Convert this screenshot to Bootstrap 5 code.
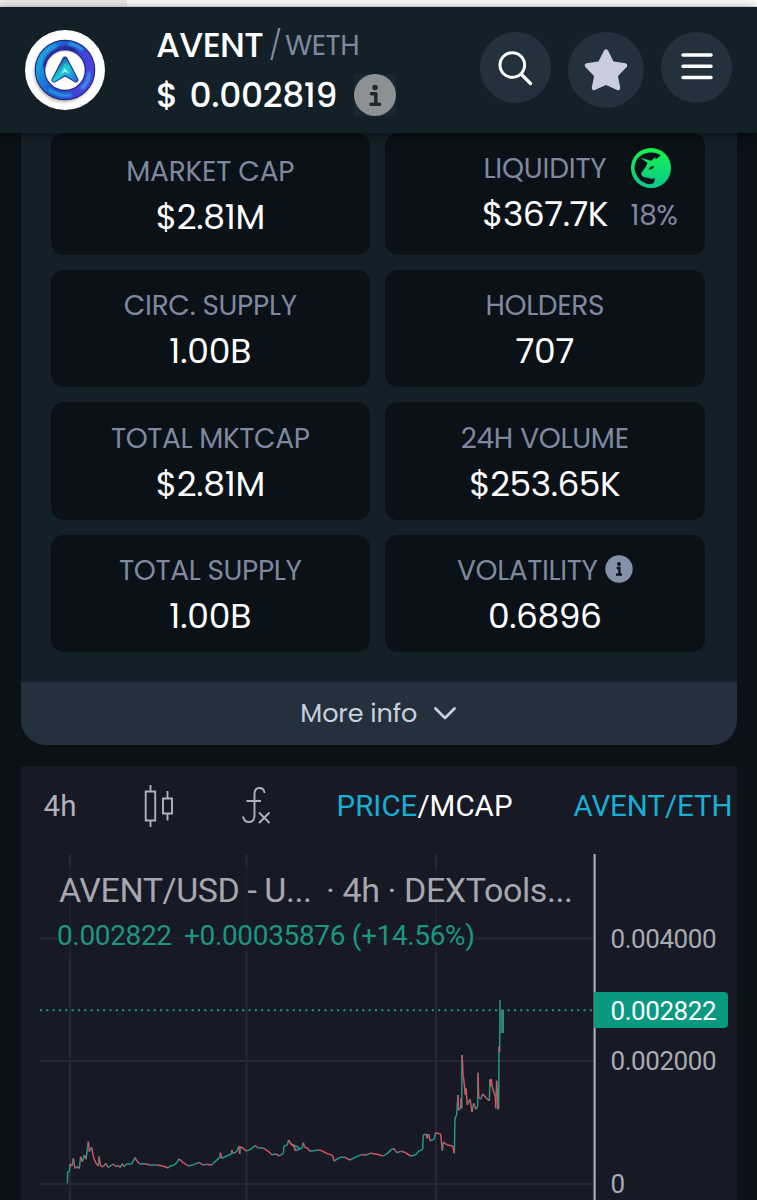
<!DOCTYPE html>
<html lang="en" data-bs-theme="dark">
<head>
<meta charset="utf-8">
<meta name="viewport" content="width=device-width, initial-scale=1">
<title>AVENT / WETH</title>
<link href="https://cdn.jsdelivr.net/npm/bootstrap@5.3.0/dist/css/bootstrap.min.css" rel="stylesheet">
<style>
body{background:#0a1117;font-family:Poppins,Inter,sans-serif;height:1200px;overflow:hidden;color:#fff}
.strip{height:7px;background:#fff;border-bottom:1px solid #dfe4e7}
.strip-tab{width:127px;height:6px;background:#efeded}
.topbar{height:126px;background:#142028;padding-left:25px;padding-right:25px;box-shadow:0 2px 12px rgba(0,0,0,.45);position:relative;z-index:2}
.fit{display:inline-block;white-space:nowrap}
.token-names{margin-left:51px;width:323px;height:126px;padding-top:11.5px}
.line-a{height:52px;line-height:53px}
.line-b{height:48px;line-height:50px}
.sym{font-size:34.5px;font-weight:500}
.quote{font-size:28px;color:#7f889f;line-height:53px}
.slash{font-size:29px;font-weight:300;color:#858da5;line-height:52px;margin:0 5px 0 6px}
.line-b .sym+.sym{margin-left:14.500px}
.infobox{width:42px;height:42px;background:#1b272e;margin-left:17px}
.round{width:71px;height:71px;background:#24313c}
.round-lg{width:76px;height:76px}
.actions{margin-left:1px;gap:17px;height:71px;margin-bottom:5px}
.panel{margin:0 20.5px 0 21px;background:#142028;border-radius:0 0 25px 25px;overflow:hidden;height:612px}
.stats{padding:0 32px 0 29.5px;display:grid;grid-template-columns:319.5px 319.5px;column-gap:15px;row-gap:15px;grid-template-rows:121.5px 117.5px 117.5px 117.5px}
.stat{background:#0a1117;border-radius:13px;padding-top:15.5px;text-align:center}
.stat-first{padding-top:17.5px}
.lab{font-size:28px;font-weight:400;line-height:41px;height:40px;color:#7f889f}
.val{font-size:34.5px;font-weight:400;line-height:52px;height:52px}
.liq{padding-left:97px;gap:22.500px;justify-content:flex-start;padding-top:15px}
.pct{font-size:28px;line-height:55px;color:#7f889f}
.more{height:63px;margin-top:29.5px;background:#24313c;color:#c8cfdf;font-size:25.5px;gap:17px;padding-right:1px}
.chart{margin:21px 20px 0 21px;height:434px;background:#171924;font-family:Roboto,sans-serif}
.chart text{font-family:Roboto,sans-serif}
</style>
</head>
<body>
<div class="strip"><div class="strip-tab"></div></div>
<header class="topbar d-flex align-items-center">
  <svg width="80" height="80" viewBox="0 0 80 80" class="flex-shrink-0">
    <defs>
      <linearGradient id="ring" x1="0" y1=".3" x2="1" y2=".6"><stop offset="0" stop-color="#159bdc"/><stop offset=".45" stop-color="#2347c9"/><stop offset="1" stop-color="#5040df"/></linearGradient>
      <linearGradient id="arrow" x1="0" y1="0" x2="1" y2="1"><stop offset="0" stop-color="#21289f"/><stop offset=".5" stop-color="#21cbd0"/><stop offset="1" stop-color="#246ddb"/></linearGradient>
      <filter id="soft" x="-20%" y="-20%" width="140%" height="140%"><feGaussianBlur stdDeviation="1.6"/></filter>
      <filter id="sheen" x="-20%" y="-20%" width="140%" height="140%"><feGaussianBlur stdDeviation=".8"/></filter>
    </defs>
    <circle cx="40" cy="40" r="40" fill="#fff"/>
    <circle cx="39" cy="42" r="26" fill="none" stroke="#7f7770" stroke-width="8" opacity=".55" filter="url(#soft)"/>
    <circle cx="40" cy="40" r="25" fill="none" stroke="#17236f" stroke-width="10.5"/>
    <circle cx="40" cy="40" r="25" fill="none" stroke="url(#ring)" stroke-width="8.5"/>
    <g fill="none" stroke-linecap="round" filter="url(#sheen)">
      <path d="M14 40A26 26 0 0 1 30 16M25 60A25 25 0 0 0 45 65" stroke="#20a0e4" stroke-width="3"/>
      <path d="M50 20A22 22 0 0 0 19 36" stroke="#291b94" stroke-width="3"/>
      <path d="M44 13.500A27 27 0 0 1 57 19.500M64 43Q64 52 57 58" stroke="#27b4e8" stroke-width="2.400"/>
    </g>
    <path d="M40 29L29 50L40 43.500L51 50Z" fill="none" stroke="#19308f" stroke-width="5" stroke-linejoin="round"/>
    <path d="M40 30L29 50L40 43L51 50Z" fill="#21cbd0" stroke="url(#arrow)" stroke-width="3.500" stroke-linejoin="round"/>
    <path d="M40 38L36 44L40 41.500L44 44Z" fill="#a9eee9"/>
  </svg>
  <div class="token-names flex-shrink-0">
    <div class="line-a d-flex align-items-start"><span class="fit sym" data-w="107">AVENT</span><span class="fit slash" data-w="11">/</span><span class="fit quote" data-w="74">WETH</span></div>
    <div class="line-b d-flex align-items-center"><span class="fit sym" data-w="19">$</span><span class="fit sym" data-w="147.500">0.002819</span>
      <span class="infobox d-block"><svg width="42" height="42" viewBox="0 0 42 42" class="d-block"><circle cx="21" cy="21" r="21" fill="#8e9193"/><circle cx="21" cy="13.500" r="2.800" fill="#1f2a30"/><path d="M17.500 19.800h4.300v10.200M17 30.200h8.500" fill="none" stroke="#1f2a30" stroke-width="3.600" stroke-linecap="round" stroke-linejoin="round"/></svg></span></div>
  </div>
  <div class="actions d-flex align-items-start">
    <div class="round rounded-circle"><svg width="71" height="71" viewBox="0 0 71 71" fill="none" stroke="#fff" stroke-linecap="round"><circle cx="32.300" cy="33" r="12.300" stroke-width="3"/><path d="M41.500 42.500L50.500 51.500" stroke-width="3.200"/></svg></div>
    <div class="round round-lg rounded-circle"><svg width="76" height="76" viewBox="0 0 76 76"><path d="M38 19.500L44 31.500L57 33.500L47.500 43.500L50 56L38 50.500L26 56L28.500 43.500L19 33.500L32 31.500Z" fill="#cbcddd" stroke="#cbcddd" stroke-width="4.500" stroke-linejoin="round"/></svg></div>
    <div class="round rounded-circle"><svg width="71" height="71" viewBox="0 0 71 71"><path d="M22 23h28M22 34.300h28M22 45.500h28" stroke="#fff" stroke-width="3.500" stroke-linecap="round"/></svg></div>
  </div>
</header>
<section class="panel">
  <div class="stats">
    <div class="stat stat-first"><div class="lab"><span class="fit" data-w="168">MARKET CAP</span></div><div class="val"><span class="fit" data-w="109">$2.81M</span></div></div>
    <div class="stat liq d-flex">
      <div><div class="lab"><span class="fit" data-w="123">LIQUIDITY</span></div><div class="val"><span class="fit" data-w="126">$367.7K</span></div></div>
      <div class="text-start"><svg width="40" height="40" viewBox="0 0 40 40" class="d-block"><defs><linearGradient id="uni" x1="0" y1="0" x2="0" y2="1"><stop offset="0" stop-color="#15f54c"/><stop offset="1" stop-color="#0bc98c"/></linearGradient></defs><circle cx="20" cy="20" r="20" fill="url(#uni)"/><path d="M30 7.500C22 1.500 4 4 3.500 20C4 28 10 35 18 36.200C22.500 36.500 24.500 34 23.500 29.500C22.500 31 21 31 19 30.500L11.500 28.500L10 25.500L15 18.500L16.500 15L9.500 9.800L20 12.800L24.500 9L24.500 11.500L29 8Z" fill="#0a1117"/><path d="M17.500 21.500Q19.500 17.500 23 18.300Q22 22 17.500 21.500Z" fill="#0a1117"/></svg><div class="pct"><span class="fit" data-w="47">18%</span></div></div>
    </div>
    <div class="stat"><div class="lab"><span class="fit" data-w="173">CIRC. SUPPLY</span></div><div class="val"><span class="fit" data-w="82">1.00B</span></div></div>
    <div class="stat"><div class="lab"><span class="fit" data-w="118.500">HOLDERS</span></div><div class="val"><span class="fit" data-w="58.500">707</span></div></div>
    <div class="stat"><div class="lab"><span class="fit" data-w="198.500">TOTAL MKTCAP</span></div><div class="val"><span class="fit" data-w="109">$2.81M</span></div></div>
    <div class="stat"><div class="lab"><span class="fit" data-w="168">24H VOLUME</span></div><div class="val"><span class="fit" data-w="151">$253.65K</span></div></div>
    <div class="stat"><div class="lab"><span class="fit" data-w="182.500">TOTAL SUPPLY</span></div><div class="val"><span class="fit" data-w="82">1.00B</span></div></div>
    <div class="stat"><div class="lab d-flex justify-content-center align-items-center"><span class="fit" data-w="140.500">VOLATILITY</span><svg width="28" height="28" viewBox="0 0 28 28" style="margin:-2px 0 0 7px"><circle cx="14" cy="14" r="13.700" fill="#8590a9"/><circle cx="14" cy="9" r="1.900" fill="#0a1117"/><path d="M11.800 13h2.600v6.500M11 19.700h6" fill="none" stroke="#0a1117" stroke-width="2.300"/></svg></div><div class="val"><span class="fit" data-w="113.500">0.6896</span></div></div>
  </div>
  <div class="more d-flex align-items-center justify-content-center"><span class="fit" data-w="117">More info</span><svg width="22" height="14" viewBox="0 0 22 14" fill="none" stroke="#c8cfdf" stroke-width="2.800" stroke-linecap="round" stroke-linejoin="round"><path d="M1.500 2.500L11 12L20.500 2.500"/></svg></div>
</section>
<section class="chart">
  <svg width="716" height="434" viewBox="21 766 716 434" class="d-block">
    <g stroke="#262933" stroke-width="2"><path d="M70 854V1200M246.500 854V1200M436 854V1200M40 938.500H594M40 1061H594M40 1184H594"/></g>
    <path d="M57 868H583V910H478V953H57Z" fill="#171924" opacity=".6"/>
    <path d="M40 1010.300H594" stroke="#1e9b87" stroke-width="2" stroke-dasharray="2 4.320"/>
    <g id="series" fill="none" stroke-width="1.500"></g>
    <path d="M502.300 1010V1033" stroke="#32877a" stroke-width="3.400"/>
    <path d="M594.600 854V1200" stroke="#b8b9be" stroke-width="2"/>
    <path d="M594 992H724a4 4 0 0 1 4 4V1024a4 4 0 0 1-4 4H594Z" fill="#089981"/>
    <g fill="#a9abb3" font-size="26">
      <text x="610.500" y="947.500" textLength="106">0.004000</text>
      <text x="610.500" y="1070" textLength="106">0.002000</text>
      <text x="610.500" y="1193">0</text>
      <text x="610.500" y="1020" textLength="106" fill="#fff">0.002822</text>
    </g>
    <g font-size="29.500">
      <text x="43.500" y="815.500" textLength="33" fill="#b0b1b9">4h</text>
      <text x="336.500" y="815.500" textLength="176" fill="#fff"><tspan fill="#17b0d3">PRICE</tspan>/MCAP</text>
      <text x="573.500" y="815.500" textLength="159" fill="#17b0d3">AVENT/ETH</text>
    </g>
    <g font-size="28" fill="#1b9781">
      <text x="57" y="945" textLength="115">0.002822</text>
      <text x="184" y="945" textLength="291">+0.00035876 (+14.56%)</text>
    </g>
    <g font-size="34" fill="#a6a7af">
      <text x="59" y="902" textLength="253">AVENT/USD - U...</text>
      <text x="326" y="902" textLength="247">· 4h · DEXTools...</text>
    </g>
    <g fill="none" stroke="#b0b1b9" stroke-width="1.900">
      <path d="M145.700 791.500H155.200V820.500H145.700ZM150.500 785V791.500M150.500 820.500V827M163 798.500H172V813.500H163ZM167.500 791V798.500M167.500 813.500V820.500"/>
      <path d="M264.500 793Q264 788 259.500 788Q254.500 788 254.500 794V815Q254.500 822 249 822Q244 822 243 816.500M246.500 801H261M259 812.500L269.500 823M269.500 812.500L259 823"/>
    </g>
  </svg>
</section>
<script src="https://cdn.jsdelivr.net/npm/bootstrap@5.3.0/dist/js/bootstrap.bundle.min.js"></script>
<script>
document.querySelectorAll('.fit').forEach(function (el) {
  var n = el.textContent.length, w = +el.dataset.w;
  var s = (w - el.getBoundingClientRect().width) / n;
  el.style.letterSpacing = s + 'px';
});
// 4h price series: thirds of a pixel from each block's origin
var blocks = [
  [40, 1060, '82,370 83,335 88,335 90,312 96,318 100,295 105,325 112,320 118,325 122,290 127,305 133,285 138,298 145,245 148,275 155,262 160,290 168,310 175,318 177,290 182,318 190,320 197,310 205,322 220,312 228,320 235,316 240,323 247,311 252,320 260,312 275,312 285,293 292,305 300,312 315,311 330,315 350,315 368,318 385,324 390,318 402,316 410,308 417,297 430,308 445,318 460,314 478,307 488,315 500,313 515,315 528,302 540,292 541,278 545,295 560,288 575,282 575,270 580,280 590,275 597,258 599,282 601,260 608,264 618,273 632,268 645,257 655,264 670,264 690,278 695,284 708,282 718,288 730,280 732,258 742,255 746,240 755,255 762,258 767,272 779,264'],
  [290, 980, '0,490 10,495 16,512 36,505 40,488 44,502 52,504 60,514 85,510 95,512 110,520 128,527 132,543 150,532 165,532 180,540 200,530 215,524 228,525 240,520 258,522 280,528 292,520 305,508 312,506 320,518 332,514 345,517 362,528 378,524 385,514 398,508 400,465 410,462 411,475 416,462 420,482 432,478 437,458 452,462 457,512 460,486 470,494 488,498 493,520 495,415 500,405 504,345 506,390 512,385 513,355 515,385 516,225 518,255 519,290 521,295 526,345 528,325 532,375 540,358 546,396 551,370 558,388 563,380 564,278 566,352 572,358 578,342 590,355 598,362 600,298 602,318 604,298 606,318 616,350 617,385 620,302 624,388 626,385 627,200 629,215 630,60 630,155']
];
var pts = [];
blocks.forEach(function (b) {
  b[2].split(' ').forEach(function (p) {
    var c = p.split(',');
    pts.push([b[0] + c[0] / 3, b[1] + c[1] / 3]);
  });
});
var up = '', down = '';
for (var i = 1; i < pts.length - 1; i++) {
  var seg = 'M' + pts[i - 1].join(' ') + 'L' + pts[i].join(' ');
  if (pts[i][1] > pts[i - 1][1]) down += seg; else up += seg;
}
document.getElementById('series').innerHTML =
  '<path d="' + up + '" stroke="#23988a"/><path d="' + down + '" stroke="#d45560"/>';
</script>
</body>
</html>
